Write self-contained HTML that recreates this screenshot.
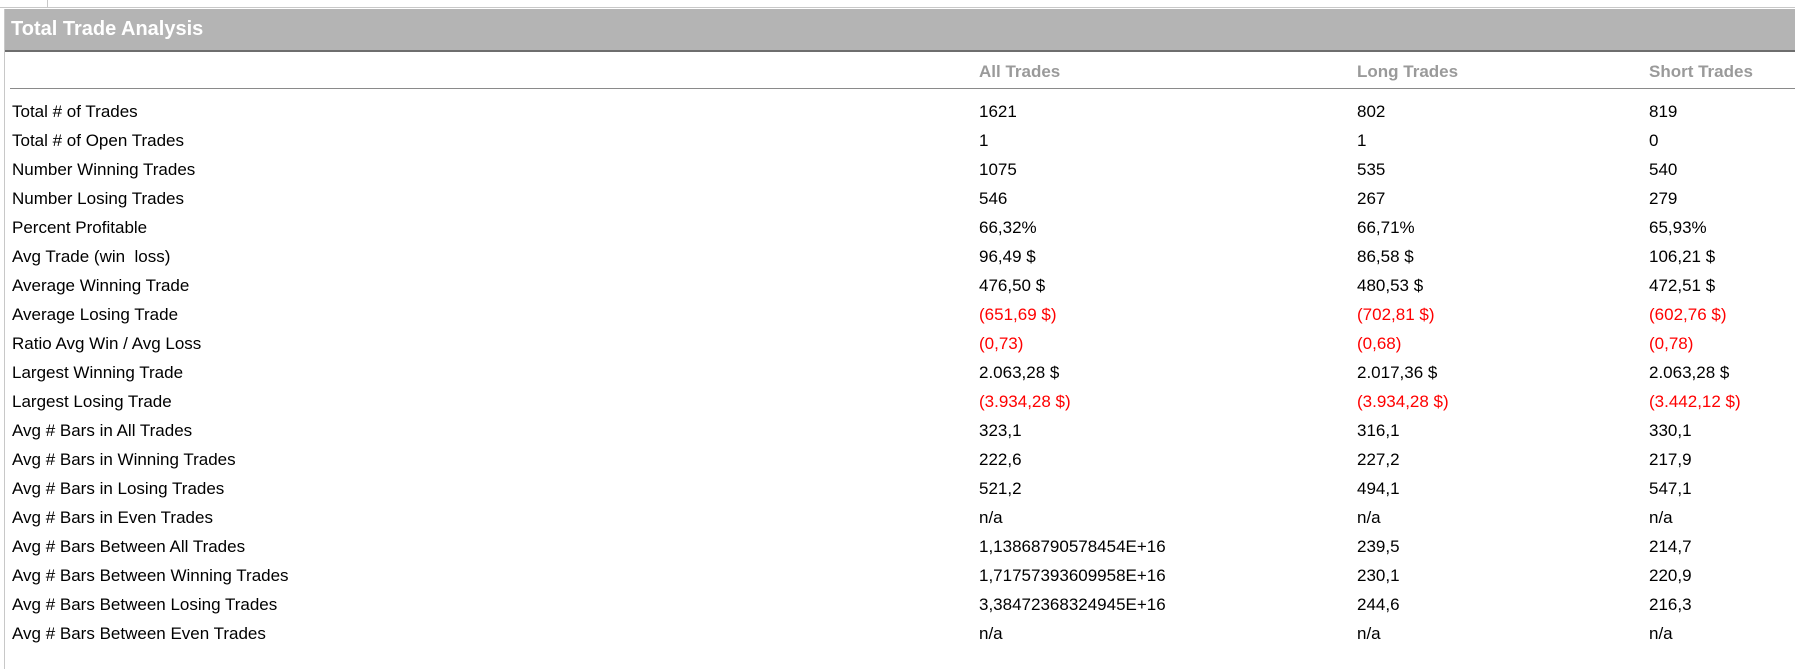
<!DOCTYPE html>
<html><head><meta charset="utf-8"><style>
body{margin:0;width:1795px;height:669px;background:#fff;position:relative;overflow:hidden;font-family:"Liberation Sans",sans-serif;}
.top{position:absolute;left:0;top:7px;width:1795px;height:1px;background:#c8c8c8}
.tick{position:absolute;left:47px;top:0;width:1px;height:7px;background:#c8c8c8}
.frame{position:absolute;left:4px;top:9px;width:1px;height:660px;background:#c8c8c8}
.bar{position:absolute;left:5px;top:9px;width:1790px;height:41px;background:#b4b4b4;border-bottom:2px solid #6e6e6e}
.bar span{position:absolute;left:6px;top:9px;color:#fff;font-weight:bold;font-size:20px}
.hl{position:absolute;left:10px;top:88px;width:1785px;height:1px;background:#8a8a8a}
.h{position:absolute;top:62px;color:#9a9a9a;font-weight:bold;font-size:17px}
.r{position:absolute;left:0;height:29px;line-height:29px;font-size:17px;color:#000;width:1795px}
.r span{position:absolute;top:0}
.c0{left:12px}.c1{left:979px}.c2{left:1357px}.c3{left:1649px}
.red{color:#f00}
</style></head><body>
<div class="top"></div><div class="tick"></div><div class="frame"></div>
<div class="bar"><span>Total Trade Analysis</span></div>
<div class="h" style="left:979px">All Trades</div>
<div class="h" style="left:1357px">Long Trades</div>
<div class="h" style="left:1649px">Short Trades</div>
<div class="hl"></div>
<div class="r" style="top:97px"><span class="c0">Total # of Trades</span><span class="c1">1621</span><span class="c2">802</span><span class="c3">819</span></div>
<div class="r" style="top:126px"><span class="c0">Total # of Open Trades</span><span class="c1">1</span><span class="c2">1</span><span class="c3">0</span></div>
<div class="r" style="top:155px"><span class="c0">Number Winning Trades</span><span class="c1">1075</span><span class="c2">535</span><span class="c3">540</span></div>
<div class="r" style="top:184px"><span class="c0">Number Losing Trades</span><span class="c1">546</span><span class="c2">267</span><span class="c3">279</span></div>
<div class="r" style="top:213px"><span class="c0">Percent Profitable</span><span class="c1">66,32%</span><span class="c2">66,71%</span><span class="c3">65,93%</span></div>
<div class="r" style="top:242px"><span class="c0">Avg Trade (win &nbsp;loss)</span><span class="c1">96,49 $</span><span class="c2">86,58 $</span><span class="c3">106,21 $</span></div>
<div class="r" style="top:271px"><span class="c0">Average Winning Trade</span><span class="c1">476,50 $</span><span class="c2">480,53 $</span><span class="c3">472,51 $</span></div>
<div class="r red" style="top:300px"><span class="c0" style="color:#000">Average Losing Trade</span><span class="c1">(651,69 $)</span><span class="c2">(702,81 $)</span><span class="c3">(602,76 $)</span></div>
<div class="r red" style="top:329px"><span class="c0" style="color:#000">Ratio Avg Win / Avg Loss</span><span class="c1">(0,73)</span><span class="c2">(0,68)</span><span class="c3">(0,78)</span></div>
<div class="r" style="top:358px"><span class="c0">Largest Winning Trade</span><span class="c1">2.063,28 $</span><span class="c2">2.017,36 $</span><span class="c3">2.063,28 $</span></div>
<div class="r red" style="top:387px"><span class="c0" style="color:#000">Largest Losing Trade</span><span class="c1">(3.934,28 $)</span><span class="c2">(3.934,28 $)</span><span class="c3">(3.442,12 $)</span></div>
<div class="r" style="top:416px"><span class="c0">Avg # Bars in All Trades</span><span class="c1">323,1</span><span class="c2">316,1</span><span class="c3">330,1</span></div>
<div class="r" style="top:445px"><span class="c0">Avg # Bars in Winning Trades</span><span class="c1">222,6</span><span class="c2">227,2</span><span class="c3">217,9</span></div>
<div class="r" style="top:474px"><span class="c0">Avg # Bars in Losing Trades</span><span class="c1">521,2</span><span class="c2">494,1</span><span class="c3">547,1</span></div>
<div class="r" style="top:503px"><span class="c0">Avg # Bars in Even Trades</span><span class="c1">n/a</span><span class="c2">n/a</span><span class="c3">n/a</span></div>
<div class="r" style="top:532px"><span class="c0">Avg # Bars Between All Trades</span><span class="c1">1,13868790578454E+16</span><span class="c2">239,5</span><span class="c3">214,7</span></div>
<div class="r" style="top:561px"><span class="c0">Avg # Bars Between Winning Trades</span><span class="c1">1,71757393609958E+16</span><span class="c2">230,1</span><span class="c3">220,9</span></div>
<div class="r" style="top:590px"><span class="c0">Avg # Bars Between Losing Trades</span><span class="c1">3,38472368324945E+16</span><span class="c2">244,6</span><span class="c3">216,3</span></div>
<div class="r" style="top:619px"><span class="c0">Avg # Bars Between Even Trades</span><span class="c1">n/a</span><span class="c2">n/a</span><span class="c3">n/a</span></div>
</body></html>
